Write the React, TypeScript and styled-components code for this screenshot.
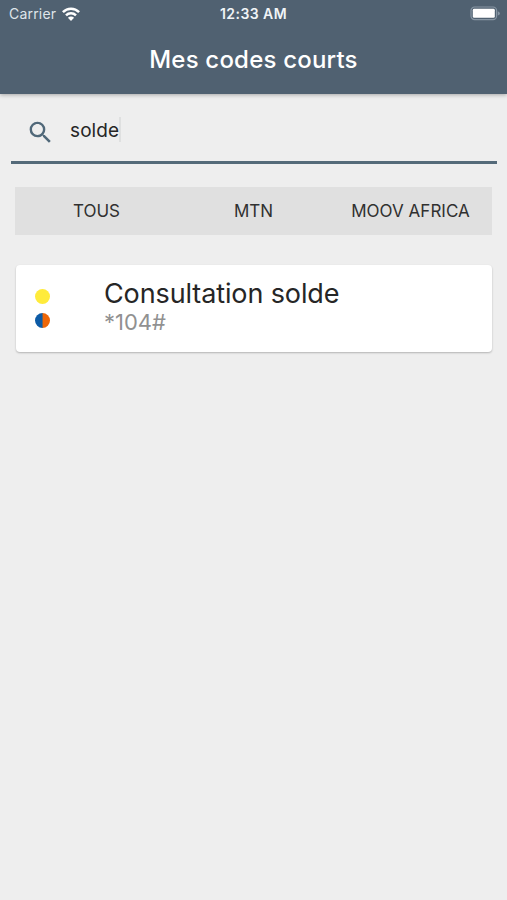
import React from "react";
import styled, { createGlobalStyle } from "styled-components";

const GlobalStyle = createGlobalStyle`
  * { box-sizing: border-box; }
  body {
    margin: 0;
    background: #eeeeee;
    font-family: Inter, "Liberation Sans", sans-serif;
    color: #262626;
  }
`;

const Screen = styled.div`
  display: flex;
  flex-direction: column;
  width: 100%;
  min-height: 900px;
  background: #eeeeee;
`;

const Header = styled.header`
  height: 94px;
  background: #506171;
  color: #ffffff;
  box-shadow: 0 1px 4px rgba(0, 0, 0, 0.3);
`;

const StatusBar = styled.div`
  display: grid;
  grid-template-columns: 1fr auto 1fr;
  align-items: center;
  height: 27px;
  padding: 0 7px 0 9px;
`;

const Carrier = styled.div`
  display: flex;
  align-items: center;
  gap: 6px;
  font-size: 14px;
  letter-spacing: 0.2px;
  color: #dfe5ea;
`;

const Clock = styled.div`
  margin-right: 2px;
  font-size: 14px;
  font-weight: 600;
  letter-spacing: 0.45px;
  color: #f0f4f7;
`;

const Battery = styled.div`
  display: flex;
  justify-content: flex-end;
`;

const Title = styled.h1`
  margin: 0;
  height: 66px;
  line-height: 66px;
  text-align: center;
  font-size: 24px;
  font-weight: 500;
  letter-spacing: 0.2px;
`;

const SearchField = styled.label`
  display: flex;
  align-items: center;
  height: 70px;
  margin: 0 10px 0 11px;
  padding: 9px 14px 0 15px;
  border-bottom: 3px solid #546a79;
`;

const Query = styled.span`
  margin-left: 15px;
  margin-bottom: 3px;
  font-size: 19px;
  line-height: 24px;
  letter-spacing: 0.1px;
`;

const Caret = styled.span`
  width: 2px;
  height: 25px;
  margin-bottom: 5px;
  background: #dfe0e0;
`;

const Tabs = styled.nav`
  display: grid;
  grid-template-columns: repeat(3, 1fr);
  height: 48px;
  margin: 23px 15px 0;
  padding: 0 3px;
  background: #e0e0e0;
`;

const Tab = styled.button`
  padding: 0;
  border: 0;
  background: none;
  font: 400 17px/48px Inter, sans-serif;
  letter-spacing: 0.02px;
  color: #303030;
`;

const Card = styled.article`
  display: flex;
  height: 87px;
  margin: 30px 15px 0 16px;
  border-radius: 4px;
  background: #ffffff;
  box-shadow: 0 1px 2px rgba(0, 0, 0, 0.25);
`;

const Operators = styled.div`
  display: flex;
  flex-direction: column;
  gap: 9px;
  width: 88px;
  padding: 24px 0 0 19px;
`;

const Dot = styled.span<{ $fill: string }>`
  width: 15px;
  height: 15px;
  border-radius: 50%;
  background: ${({ $fill }) => $fill};
`;

const CodeText = styled.div`
  padding-top: 13px;
`;

const CodeName = styled.div`
  font-size: 27px;
  line-height: 32px;
  letter-spacing: -0.12px;
`;

const CodeValue = styled.div`
  font-size: 22px;
  line-height: 24px;
  color: #919191;
`;

const WifiIcon = () => (
  <svg width="18" height="14" viewBox="0 0 18 14" fill="none" stroke="#fff" strokeWidth="2.5">
    <path d="M0.9 5.1C5.4 0.5 12.6 0.5 17.1 5.1" />
    <path d="M4 8.4C6.8 5.6 11.2 5.6 14 8.4" />
    <path d="M9 13.9L5.9 10.8C7.6 9.2 10.4 9.2 12.1 10.8Z" fill="#fff" stroke="none" />
  </svg>
);

const BatteryIcon = () => (
  <svg width="30" height="15" viewBox="0 0 30 15">
    <rect x="1" y="1" width="25.6" height="12.6" rx="3.6" fill="none" stroke="#8796a4" strokeWidth="1.2" />
    <rect x="2.8" y="2.8" width="22" height="9" rx="1.4" fill="#fff" />
    <path d="M27.8 5.2Q29.9 6 29.9 7.4T27.8 9.6Z" fill="#8796a4" />
  </svg>
);

const SearchIcon = () => (
  <svg width="29" height="29" viewBox="0 0 24 24" fill="#506879">
    <path d="M15.5 14h-.79l-.28-.27A6.47 6.47 0 0 0 16 9.5 6.5 6.5 0 1 0 9.5 16c1.61 0 3.09-.59 4.23-1.57l.27.28v.79l5 4.99L20.49 19l-4.99-5zm-6 0C7.01 14 5 11.99 5 9.5S7.01 5 9.5 5 14 7.01 14 9.5 11.99 14 9.5 14z" />
  </svg>
);

const operators = [
  "#ffeb3b",
  "linear-gradient(90deg, #0d5ba6 0 46%, #6d625d 46% 54%, #ec6608 54%)",
];

export default function App() {
  return (
    <Screen>
      <GlobalStyle />
      <Header>
        <StatusBar>
          <Carrier>
            Carrier
            <WifiIcon />
          </Carrier>
          <Clock>12:33 AM</Clock>
          <Battery>
            <BatteryIcon />
          </Battery>
        </StatusBar>
        <Title>Mes codes courts</Title>
      </Header>
      <SearchField>
        <SearchIcon />
        <Query>solde</Query>
        <Caret />
      </SearchField>
      <Tabs>
        {["TOUS", "MTN", "MOOV AFRICA"].map((label) => (
          <Tab key={label}>{label}</Tab>
        ))}
      </Tabs>
      <Card>
        <Operators>
          {operators.map((fill) => (
            <Dot key={fill} $fill={fill} />
          ))}
        </Operators>
        <CodeText>
          <CodeName>Consultation solde</CodeName>
          <CodeValue>*104#</CodeValue>
        </CodeText>
      </Card>
    </Screen>
  );
}
